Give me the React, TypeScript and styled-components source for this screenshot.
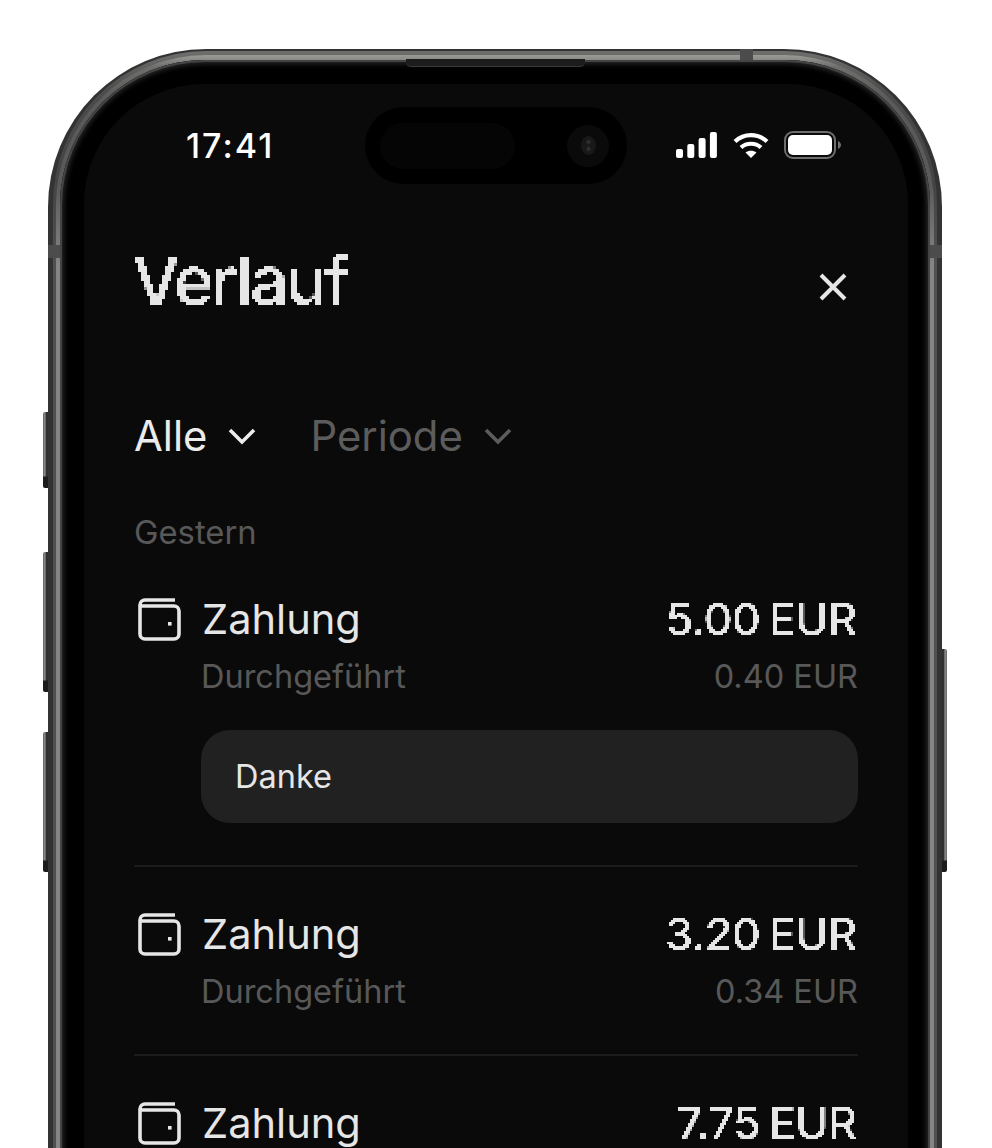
import styled, { createGlobalStyle } from "styled-components"

const GlobalStyle = createGlobalStyle`
    html, body {
        margin: 0;
        padding: 0;
        background: #ffffff;
    }
    * {
        box-sizing: border-box;
    }
`

const Page = styled.div`
    position: relative;
    width: 992px;
    height: 1148px;
    overflow: hidden;
    background: #ffffff;
    padding: 49px 50px 0 48px;
    font-family: Inter, "Liberation Sans", sans-serif;
`

const Frame = styled.div`
    position: relative;
    height: 1300px;
    padding: 2px 5px 0;
    border-radius: 158px 158px 0 0;
    background: #333333;
`

const Rim = styled.div`
    padding: 4px 3px 0;
    height: 100%;
    border-radius: 153px 153px 0 0;
    background: linear-gradient(180deg, #6e6e6c 0, #4c4c4c 40px, #444444 130px, #505050 210px);
`

const RimLight = styled.div`
    padding: 5px 4px 0;
    height: 100%;
    border-radius: 150px 150px 0 0;
    background: linear-gradient(180deg, #9a9a96 0, #6e6e6c 12px, #5a5a5a 45px, #5a5a5a 130px, #858585 210px);
`

const Bezel = styled.div`
    height: 100%;
    padding: 24px 22px 0 24px;
    border-radius: 145px 145px 0 0;
    background: #000000;
    box-shadow: inset 0 0 0 2px #444444, inset 0 0 5px 4px #262626;
`

const Screen = styled.div`
    position: relative;
    height: 100%;
    padding: 23px 50px 0 50px;
    border-radius: 120px 120px 0 0;
    background: #0a0a0a;
`

const Speaker = styled.div`
    position: absolute;
    top: 10px;
    left: 358px;
    width: 179px;
    height: 8px;
    background: #1c1c1c;
    border-radius: 0 0 5px 5px;
    border-bottom: 1px solid #3a3a3a;
`

const Band = styled.div<{ $side: "left" | "right" | "top" }>`
    position: absolute;
    background: #4c4c4c;
    ${(p) => p.$side === "top" && "top: 0; left: 692px; width: 13px; height: 11px;"}
    ${(p) => p.$side === "left" && "top: 196px; left: 0; width: 12px; height: 13px;"}
    ${(p) => p.$side === "right" && "top: 196px; right: 0; width: 12px; height: 13px;"}
`

const SideButton = styled.div<{ $top: number; $height: number; $right?: boolean }>`
    position: absolute;
    top: ${(p) => p.$top}px;
    height: ${(p) => p.$height}px;
    width: 5px;
    ${(p) => (p.$right ? "left: 942px;" : "left: 43px;")}
    border-radius: ${(p) => (p.$right ? "0 2px 2px 0" : "2px 0 0 2px")};
    background:
        linear-gradient(180deg, transparent calc(100% - 12px), #1c1c1c calc(100% - 11px)),
        linear-gradient(${(p) => (p.$right ? "270deg" : "90deg")}, #5a5a5a 0, #8c8c8c 25%, #6a6a6a 50%, #303030 70%);
`

const StatusBar = styled.div`
    position: relative;
    display: flex;
    align-items: center;
    justify-content: space-between;
    height: 76px;
    padding: 0 16.5px 0 52px;
`

const Time = styled.div`
    font-size: 34px;
    font-weight: 500;
    letter-spacing: 2px;
    color: #ffffff;
`

const Island = styled.div`
    position: absolute;
    top: 0;
    left: 231px;
    width: 262px;
    height: 77px;
    display: flex;
    align-items: center;
    justify-content: space-between;
    padding: 0 18px 0 15px;
    border-radius: 39px;
    background: #000000;
`

const IslandPill = styled.div`
    width: 135px;
    height: 46px;
    border-radius: 23px;
    background: #050505;
`

const Camera = styled.div`
    display: flex;
    align-items: center;
    justify-content: center;
    width: 42px;
    height: 42px;
    border-radius: 50%;
    background: #0a0a0a;
`

const Lens = styled.div`
    width: 15px;
    height: 19px;
    border-radius: 50%;
    background:
        radial-gradient(circle at 50% 32%, #3a3a3a 0, transparent 3px),
        radial-gradient(circle at 50% 68%, #3a3a3a 0, transparent 3px),
        #181818;
`

const StatusIcons = styled.div`
    display: flex;
    align-items: center;
    gap: 15px;
`

const Header = styled.div`
    display: flex;
    align-items: center;
    justify-content: space-between;
    margin-top: 59px;
    padding-right: 9px;
    height: 76px;
`

const Title = styled.h1`
    margin: 0 0 0 -2px;
    font-size: 68px;
    font-weight: 500;
    letter-spacing: -2.7px;
    color: #e6e6e6;
    filter: url(#pixel-large);
`

const CloseIcon = styled.svg`
    margin-top: 14px;
`

const Filters = styled.div`
    display: flex;
    align-items: center;
    gap: 54px;
    margin-top: 93px;
    height: 50px;
`

const FilterItem = styled.div<{ $muted?: boolean }>`
    display: flex;
    align-items: center;
    gap: 21px;
    font-size: 41.8px;
    color: ${(p) => (p.$muted ? "#5c5c5c" : "#ececec")};
`

const DayLabel = styled.div`
    margin-top: 52px;
    font-size: 32.8px;
    line-height: 38px;
    color: #585858;
`

const Row = styled.div<{ $first?: boolean }>`
    padding: ${(p) => (p.$first ? "46px" : "45px")} 0 42px;
    border-bottom: 2px solid #1c1c1c;
`

const RowLine = styled.div`
    display: flex;
    align-items: center;
    justify-content: space-between;
`

const RowName = styled.div`
    display: flex;
    align-items: center;
    gap: 21px;
    padding-left: 3px;
`

const Name = styled.div`
    font-size: 41.6px;
    line-height: 44px;
    color: #e6e6e6;
`

const Amount = styled.div`
    padding-right: 2px;
    font-size: 45px;
    font-weight: 500;
    line-height: 44px;
    letter-spacing: -0.6px;
    word-spacing: -3px;
    color: #e6e6e6;
    filter: url(#pixel-small);
`

const SubLine = styled.div`
    display: flex;
    justify-content: space-between;
    margin-top: 15.5px;
    padding-left: 67px;
    font-size: 32.5px;
    line-height: 40px;
    color: #585858;
`

const Note = styled.div`
    display: flex;
    align-items: center;
    height: 93px;
    margin: 33.5px 0 0 67px;
    padding-left: 34px;
    border-radius: 29px;
    font-size: 32.5px;
    color: #e6e6e6;
    background: #212121;
`

const FilterDefs = styled.svg`
    position: absolute;
    width: 0;
    height: 0;
`

const Chevron = ({ color }: { color: string }) => (
    <svg width="28" height="18" viewBox="0 0 28 18" fill="none">
        <path d="M2 3 L14 15 L26 3" stroke={color} strokeWidth="3.6" />
    </svg>
)

const Wallet = () => (
    <svg width="44" height="44" viewBox="0 0 44 44" fill="none" stroke="#e6e6e6" strokeWidth="3.6">
        <path d="M38 3 H8 A5 5 0 0 0 3 8 V37 A5 5 0 0 0 8 42 H37 A5 5 0 0 0 42 37 V14 A5 5 0 0 0 37 9 H3" />
        <rect x="31" y="25" width="3.6" height="3.6" fill="#e6e6e6" stroke="none" />
    </svg>
)

const Transaction = ({ amount, fee, note, first }: { amount: string; fee?: string; note?: string; first?: boolean }) => (
    <Row $first={first}>
        <RowLine>
            <RowName>
                <Wallet />
                <Name>Zahlung</Name>
            </RowName>
            <Amount>{amount}</Amount>
        </RowLine>
        {fee && (
            <SubLine>
                <span>Durchgeführt</span>
                <span>{fee}</span>
            </SubLine>
        )}
        {note && <Note>{note}</Note>}
    </Row>
)

export default function App() {
    return (
        <Page>
            <GlobalStyle />
            <FilterDefs>
                <filter id="pixel-large" x="-5%" y="-5%" width="110%" height="110%">
                    <feFlood x="1" y="1" width="1" height="1" />
                    <feComposite width="3" height="3" />
                    <feTile result="grid" />
                    <feComposite in="SourceGraphic" in2="grid" operator="in" />
                    <feMorphology operator="dilate" radius="1" />
                    <feComponentTransfer>
                        <feFuncA type="linear" slope="4" intercept="-1.4" />
                    </feComponentTransfer>
                </filter>
                <filter id="pixel-small" x="-5%" y="-5%" width="110%" height="110%">
                    <feFlood x="0" y="0" width="1" height="1" />
                    <feComposite width="2" height="2" />
                    <feTile result="grid" />
                    <feComposite in="SourceGraphic" in2="grid" operator="in" />
                    <feConvolveMatrix order="2" kernelMatrix="1 1 1 1" divisor="1" preserveAlpha="false" />
                    <feComponentTransfer>
                        <feFuncA type="linear" slope="4" intercept="-1.4" />
                    </feComponentTransfer>
                </filter>
            </FilterDefs>
            <SideButton $top={412} $height={76} />
            <SideButton $top={552} $height={140} />
            <SideButton $top={732} $height={140} />
            <SideButton $top={649} $height={223} $right />
            <Frame>
                <Rim>
                    <RimLight>
                        <Bezel>
                            <Screen>
                                <StatusBar>
                                    <Time>17:41</Time>
                                    <Island>
                                        <IslandPill />
                                        <Camera>
                                            <Lens />
                                        </Camera>
                                    </Island>
                                    <StatusIcons>
                                        <svg width="42" height="26" viewBox="0 0 42 26" fill="#ffffff">
                                            <rect x="0" y="17" width="7" height="9" rx="2" />
                                            <rect x="11.3" y="12" width="7" height="14" rx="2" />
                                            <rect x="22.6" y="6" width="7" height="20" rx="2" />
                                            <rect x="33.9" y="0" width="7" height="26" rx="2" />
                                        </svg>
                                        <svg width="36" height="26" viewBox="0 0 36 26" fill="none" stroke="#ffffff" strokeWidth="4.2">
                                            <path d="M2 9.5 C11 1 25 1 34 9.5" />
                                            <path d="M8 15.5 C13.5 10.5 22.5 10.5 28 15.5" />
                                            <path d="M18 26 L12.5 20.6 C15.5 18.2 20.5 18.2 23.5 20.6 Z" fill="#ffffff" stroke="none" />
                                        </svg>
                                        <svg width="58" height="28" viewBox="0 0 58 28" fill="none">
                                            <rect x="1" y="1" width="50" height="26" rx="8" stroke="#6e6e6e" strokeWidth="2" />
                                            <rect x="4" y="4" width="44" height="20" rx="5" fill="#ffffff" />
                                            <path d="M54 10 C56 11 57 12.5 57 14 C57 15.5 56 17 54 18 Z" fill="#6e6e6e" />
                                        </svg>
                                    </StatusIcons>
                                </StatusBar>
                                <Header>
                                    <Title>Verlauf</Title>
                                    <CloseIcon width="32" height="32" viewBox="0 0 32 32" fill="none" stroke="#e6e6e6" strokeWidth="4">
                                        <path d="M4 4 L28 28 M28 4 L4 28" />
                                    </CloseIcon>
                                </Header>
                                <Filters>
                                    <FilterItem>
                                        Alle
                                        <Chevron color="#ececec" />
                                    </FilterItem>
                                    <FilterItem $muted>
                                        Periode
                                        <Chevron color="#5c5c5c" />
                                    </FilterItem>
                                </Filters>
                                <DayLabel>Gestern</DayLabel>
                                <Transaction first amount="5.00 EUR" fee="0.40 EUR" note="Danke" />
                                <Transaction amount="3.20 EUR" fee="0.34 EUR" />
                                <Transaction amount="7.75 EUR" />
                            </Screen>
                        </Bezel>
                    </RimLight>
                </Rim>
                <Speaker />
                <Band $side="top" />
                <Band $side="left" />
                <Band $side="right" />
            </Frame>
        </Page>
    )
}
